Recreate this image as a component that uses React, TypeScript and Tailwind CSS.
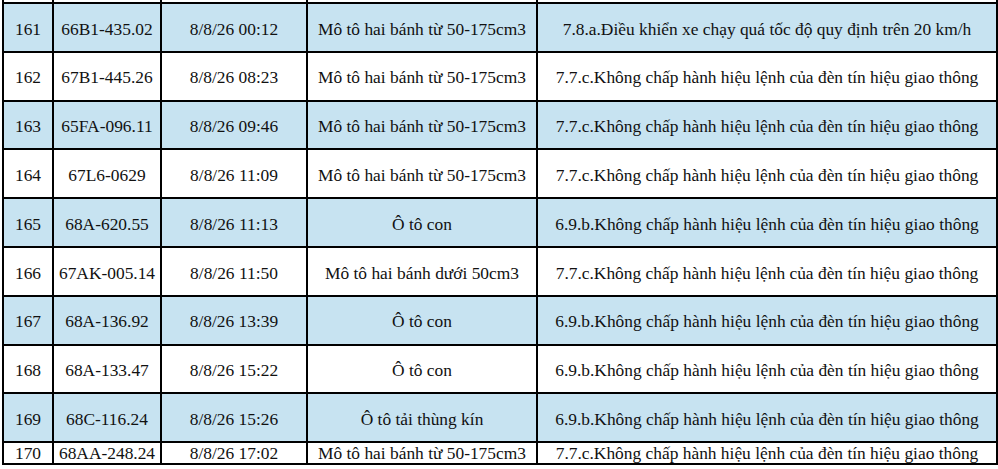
import React from 'react'

const rows = [
  ['161', '66B1-435.02', '8/8/26 00:12', 'Mô tô hai bánh từ 50-175cm3', '7.8.a.Điều khiển xe chạy quá tốc độ quy định trên 20 km/h'],
  ['162', '67B1-445.26', '8/8/26 08:23', 'Mô tô hai bánh từ 50-175cm3', '7.7.c.Không chấp hành hiệu lệnh của đèn tín hiệu giao thông'],
  ['163', '65FA-096.11', '8/8/26 09:46', 'Mô tô hai bánh từ 50-175cm3', '7.7.c.Không chấp hành hiệu lệnh của đèn tín hiệu giao thông'],
  ['164', '67L6-0629', '8/8/26 11:09', 'Mô tô hai bánh từ 50-175cm3', '7.7.c.Không chấp hành hiệu lệnh của đèn tín hiệu giao thông'],
  ['165', '68A-620.55', '8/8/26 11:13', 'Ô tô con', '6.9.b.Không chấp hành hiệu lệnh của đèn tín hiệu giao thông'],
  ['166', '67AK-005.14', '8/8/26 11:50', 'Mô tô hai bánh dưới 50cm3', '7.7.c.Không chấp hành hiệu lệnh của đèn tín hiệu giao thông'],
  ['167', '68A-136.92', '8/8/26 13:39', 'Ô tô con', '6.9.b.Không chấp hành hiệu lệnh của đèn tín hiệu giao thông'],
  ['168', '68A-133.47', '8/8/26 15:22', 'Ô tô con', '6.9.b.Không chấp hành hiệu lệnh của đèn tín hiệu giao thông'],
  ['169', '68C-116.24', '8/8/26 15:26', 'Ô tô tải thùng kín', '6.9.b.Không chấp hành hiệu lệnh của đèn tín hiệu giao thông'],
  ['170', '68AA-248.24', '8/8/26 17:02', 'Mô tô hai bánh từ 50-175cm3', '7.7.c.Không chấp hành hiệu lệnh của đèn tín hiệu giao thông'],
]

export default function App() {
  return (
    <div className="w-[998px] h-[469px] bg-white overflow-hidden pl-[2px] font-['Liberation_Serif',serif] text-[17.4px] text-[#111]">
      <table className="table-fixed border-collapse w-[994px]">
        <colgroup>
          <col className="w-[50px]" />
          <col className="w-[108px]" />
          <col className="w-[146px]" />
          <col className="w-[230px]" />
          <col className="w-[460px]" />
        </colgroup>
        <tbody>
          <tr className="h-[3px]">
            {[0, 1, 2, 3, 4].map((i) => (
              <td key={i} className="border-2 border-t-0 border-black p-0" />
            ))}
          </tr>
          {rows.map((r, idx) => (
            <tr
              key={r[0]}
              className={
                (idx === 9 ? 'h-[22px] ' : 'h-[48.8px] ') +
                (idx % 2 === 0 && idx !== 9 ? 'bg-[#c7e3f1]' : 'bg-white')
              }
            >
              {r.map((c, j) => (
                <td
                  key={j}
                  className={
                    'border-2 border-black text-center px-0 pb-0 whitespace-nowrap leading-none ' +
                    (idx === 9 ? 'pt-[1px]' : 'pt-[4px]')
                  }
                >
                  {c}
                </td>
              ))}
            </tr>
          ))}
        </tbody>
      </table>
    </div>
  )
}
